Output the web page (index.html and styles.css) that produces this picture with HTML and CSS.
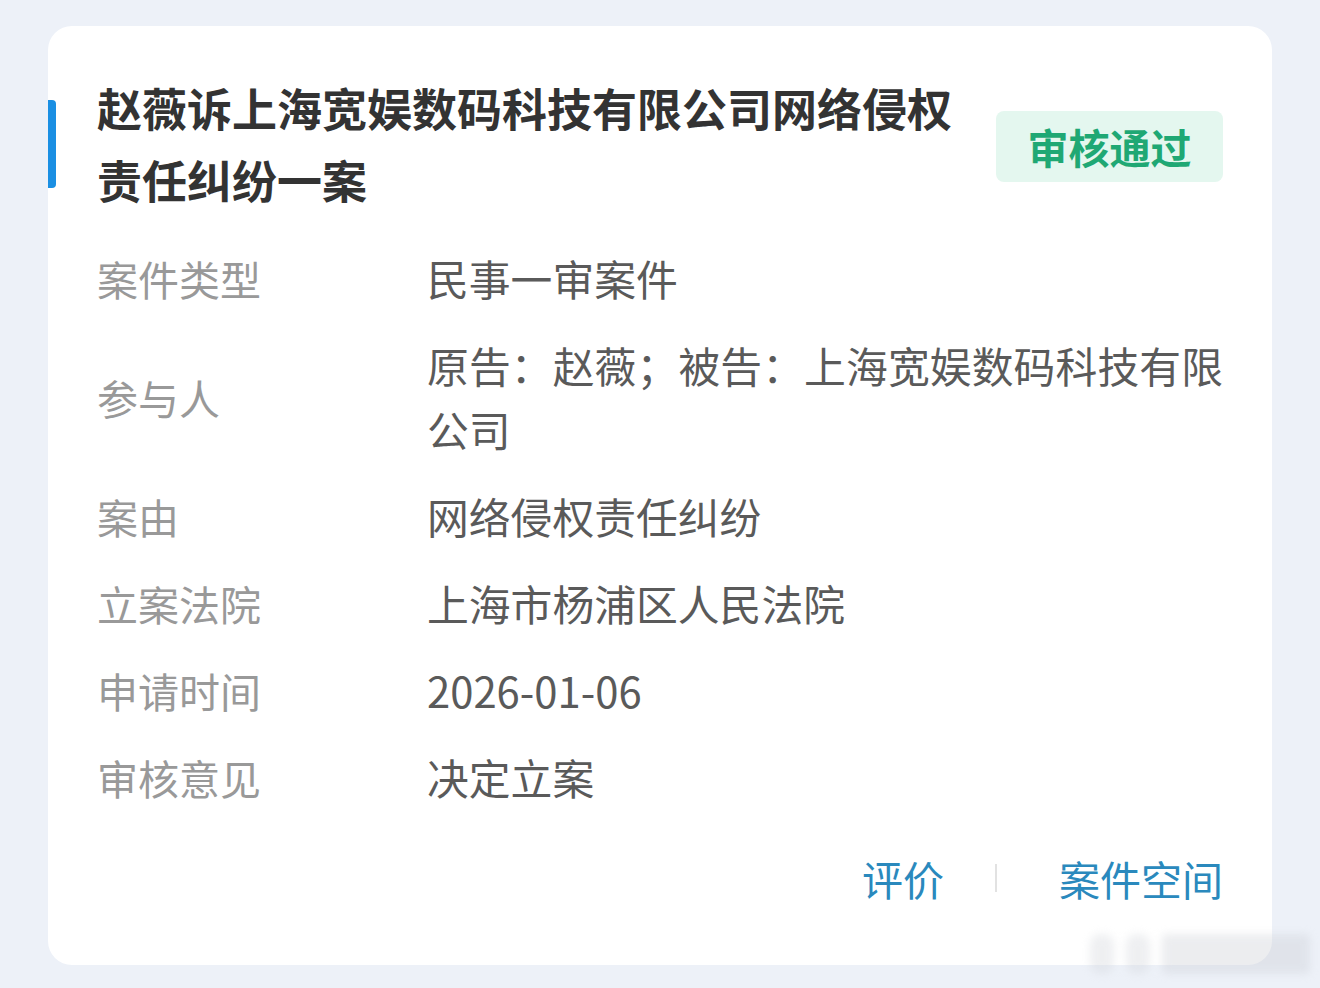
FILE: index.html
```html
<!DOCTYPE html>
<html lang="zh-CN">
<head>
    <meta charset="UTF-8">
    <meta name="viewport" content="width=device-width, initial-scale=1.0">
    <title>立案详情</title>
    <link rel="stylesheet" href="styles.css">
</head>
<body>
    <div class="card">
        <div class="card-head">
            <div class="title">赵薇诉上海宽娱数码科技有限公司网络侵权责任纠纷一案</div>
            <div class="badge">审核通过</div>
        </div>

        <div class="info">
            <div class="label">案件类型</div>
            <div class="value">民事一审案件</div>

            <div class="label">参与人</div>
            <div class="value">原告：赵薇；被告：上海宽娱数码科技有限公司</div>

            <div class="label">案由</div>
            <div class="value">网络侵权责任纠纷</div>

            <div class="label">立案法院</div>
            <div class="value">上海市杨浦区人民法院</div>

            <div class="label">申请时间</div>
            <div class="value">2026-01-06</div>

            <div class="label">审核意见</div>
            <div class="value">决定立案</div>
        </div>

        <div class="actions">
            <a class="link">评价</a>
            <span class="divider"></span>
            <a class="link">案件空间</a>
        </div>
    </div>

    <div class="watermark">
        <span></span><span></span><span class="wide"></span>
    </div>
</body>
</html>
```

FILE: styles.css
```css
body { margin: 0; padding: 26px 48px 0; background: #edf1f8; font-family: "Noto Sans CJK SC", "Noto Sans", sans-serif; }
.card { position: relative; background: #fff; border-radius: 24px; padding: 46px 49px 53px; height: 939px; box-sizing: border-box; }
.card-head { position: relative; display: flex; align-items: center; justify-content: space-between; gap: 40px; }
.card-head::before { content: ""; position: absolute; left: -49px; top: 28px; width: 8px; height: 88px; background: #1a8fe3; border-radius: 0 4px 4px 0; }
.title { flex: 1; font-size: 45px; line-height: 72px; font-weight: bold; color: #333; }
.badge { flex: none; width: 227px; height: 71px; line-height: 71px; text-align: center; border-radius: 8px; background: #e4f7ef; color: #1fa874; font-size: 41px; font-weight: bold; margin-top: 5px; }
.info { display: grid; grid-template-columns: 330px 1fr; row-gap: 23px; margin-top: 30px; align-items: center; }
.label { font-size: 41px; line-height: 64px; color: #999; }
.value { font-size: 41.8px; line-height: 64px; color: #5a5a5a; text-align: justify; }
.actions { display: flex; justify-content: flex-end; align-items: center; margin-top: 37px; }
.link { font-size: 41px; line-height: 64px; color: #2a89bd; cursor: pointer; }
.divider { width: 2px; height: 28px; background: #e2e2e2; margin: 0 62px 0 51px; }
.watermark { position: absolute; left: 1090px; top: 934px; width: 220px; height: 40px; display: flex; gap: 12px; filter: blur(4px); opacity: 0.35; }
.watermark span { width: 24px; background: #d0d3d9; border-radius: 10px; }
.watermark .wide { flex: 1; border-radius: 4px; background: #c9ccd3; }
```
